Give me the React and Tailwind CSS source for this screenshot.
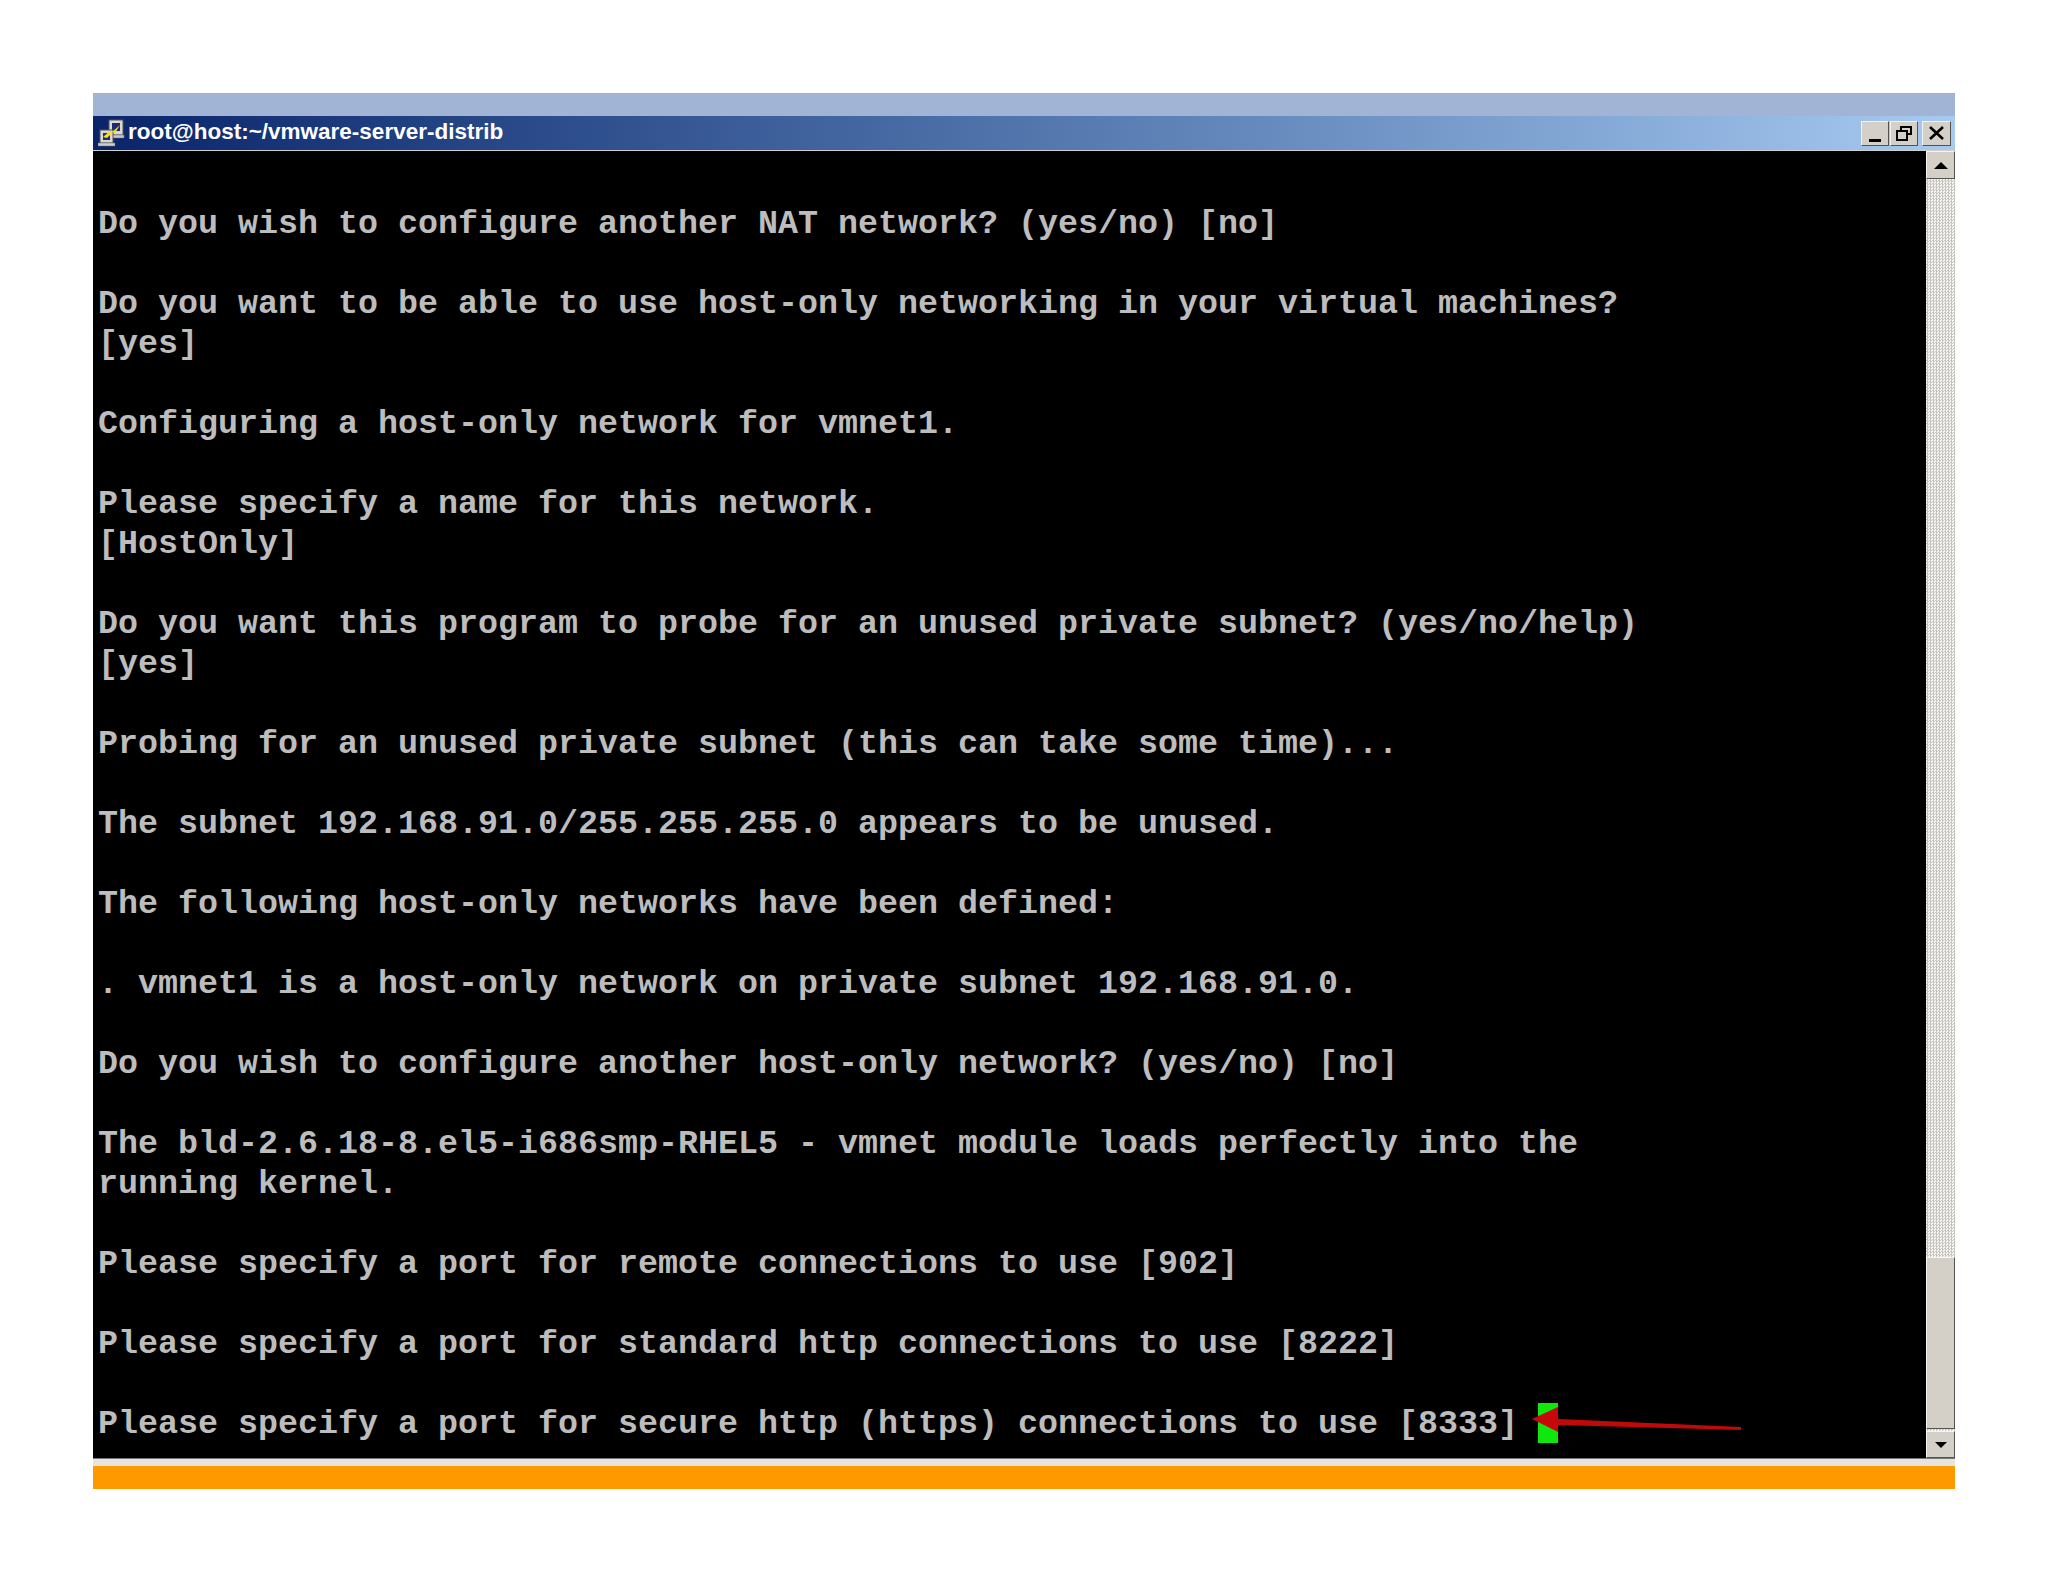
const lines = [
  "",
  "Do you wish to configure another NAT network? (yes/no) [no]",
  "",
  "Do you want to be able to use host-only networking in your virtual machines?",
  "[yes]",
  "",
  "Configuring a host-only network for vmnet1.",
  "",
  "Please specify a name for this network.",
  "[HostOnly]",
  "",
  "Do you want this program to probe for an unused private subnet? (yes/no/help)",
  "[yes]",
  "",
  "Probing for an unused private subnet (this can take some time)...",
  "",
  "The subnet 192.168.91.0/255.255.255.0 appears to be unused.",
  "",
  "The following host-only networks have been defined:",
  "",
  ". vmnet1 is a host-only network on private subnet 192.168.91.0.",
  "",
  "Do you wish to configure another host-only network? (yes/no) [no]",
  "",
  "The bld-2.6.18-8.el5-i686smp-RHEL5 - vmnet module loads perfectly into the",
  "running kernel.",
  "",
  "Please specify a port for remote connections to use [902]",
  "",
  "Please specify a port for standard http connections to use [8222]",
  "",
];

const bevel = "border border-t-[#f4f3ee] border-l-[#f4f3ee] border-r-[#55534e] border-b-[#55534e] bg-[#d4d0c8] flex items-center justify-center";

const PuttyIcon = () => (
  <svg width="27" height="28" viewBox="0 0 27 28" className="shrink-0">
    <rect x="11" y="1" width="14" height="15" fill="#d8d8d8" stroke="#555" />
    <rect x="14" y="4" width="8" height="8" fill="#1c2a78" />
    <rect x="9" y="16" width="17" height="3" fill="#c8c8c8" stroke="#666" strokeWidth="0.5" />
    <rect x="2" y="11" width="13" height="13" fill="#d8d8d8" stroke="#555" />
    <rect x="5" y="14" width="7" height="7" fill="#1c2a78" />
    <rect x="0" y="24" width="17" height="3" fill="#d0d0d0" stroke="#666" strokeWidth="0.5" />
    <path d="M5 18 L12 12 L13 14 L22 6 L17 14 L15 13 L9 19 Z" fill="#f5e020" />
  </svg>
);

const Arrow = () => (
  <svg width="220" height="40" viewBox="0 0 220 40" className="absolute left-[-6px] top-0 overflow-visible">
    <path d="M26 16 L209 24 L209 27 L26 22 Z" fill="#c00a0a" />
    <path d="M0 16 L26 4 L26 29 Z" fill="#c80808" />
  </svg>
);

export default function App() {
  return (
    <div className="w-[2048px] h-[1582px] bg-white pt-[93px] px-[93px] overflow-hidden">
      <div className="h-[23px] bg-[#a2b4d6]" />

      {/* title bar */}
      <div className="h-[34px] flex items-center pl-[5px] pr-[4px] bg-gradient-to-r from-[#0a246a] to-[#a6caf0]">
        <PuttyIcon />
        <span className="ml-[3px] -mt-[1px] font-['Liberation_Sans',sans-serif] font-bold text-[22.5px] text-white leading-none">
          root@host:~/vmware-server-distrib
        </span>
        <div className="ml-auto flex">
          <div className={`${bevel} w-[28px] h-[25px] items-end pb-[3px]`}>
            <div className="w-[12px] h-[3px] bg-black" />
          </div>
          <div className={`${bevel} w-[28px] h-[25px] ml-[1px]`}>
            <svg width="16" height="15" viewBox="0 0 16 15" fill="none" stroke="black" strokeWidth="2">
              <path d="M5 4 V1 H15 V8 H11" />
              <rect x="1" y="5" width="10" height="9" />
            </svg>
          </div>
          <div className={`${bevel} w-[29px] h-[25px] ml-[4px]`}>
            <svg width="15" height="14" viewBox="0 0 15 14" stroke="black" strokeWidth="2.6">
              <path d="M1 1 L14 13 M14 1 L1 13" />
            </svg>
          </div>
        </div>
      </div>
      <div className="h-[1px] bg-[#d0d0d0]" />

      {/* terminal */}
      <div className="h-[1307px] flex bg-black">
        <div className="flex-1 min-w-0 pt-[13px] pl-[5px] font-['Liberation_Mono',monospace] font-bold text-[33.33px] leading-[40px] text-[#bdbdbd]">
          {lines.map((line, i) => (
            <div key={i} className="h-[40px] whitespace-pre">{line}</div>
          ))}
          <div className="h-[40px] flex whitespace-pre">
            <span>Please specify a port for secure http (https) connections to use [8333] </span>
            <div className="relative w-[20px] h-[40px] -mt-[1px] bg-[#0ee80e]">
              <Arrow />
            </div>
          </div>
        </div>

        {/* scrollbar */}
        <div className="w-[29px] flex flex-col bg-[#e8e8e8] bg-[repeating-conic-gradient(#c8c5be_0%_25%,#f7f7f7_0%_50%)] bg-[length:3px_3px]">
          <div className={`${bevel} h-[28px] shrink-0`}>
            <div className="w-0 h-0 border-x-[7px] border-x-transparent border-b-[7px] border-b-black" />
          </div>
          <div className="flex-1" />
          <div className={`${bevel} h-[172px] shrink-0`} />
          <div className={`${bevel} h-[27px] shrink-0 mt-[2px]`}>
            <div className="w-0 h-0 border-x-[6px] border-x-transparent border-t-[6px] border-t-black" />
          </div>
        </div>
      </div>

      <div className="h-[1px] bg-[#777]" />
      <div className="h-[7px] bg-[#e6e4de]" />
      <div className="h-[23px] bg-[#ff9900]" />
    </div>
  );
}
